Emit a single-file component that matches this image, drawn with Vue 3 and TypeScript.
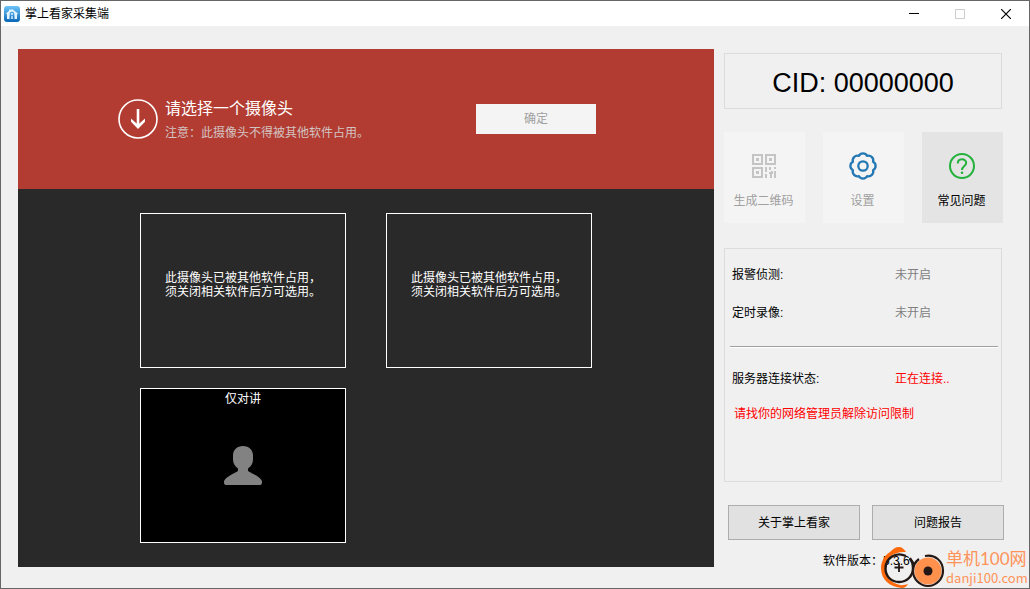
<script setup lang="ts">
interface Camera {
  id: number
  lines: string[]
}

interface StatusRow {
  label: string
  value: string
  alert?: boolean
}

const cameras: Camera[] = [
  { id: 1, lines: ['此摄像头已被其他软件占用，', '须关闭相关软件后方可选用。'] },
  { id: 2, lines: ['此摄像头已被其他软件占用，', '须关闭相关软件后方可选用。'] },
]

const features: StatusRow[] = [
  { label: '报警侦测:', value: '未开启' },
  { label: '定时录像:', value: '未开启' },
]

const connection: StatusRow = { label: '服务器连接状态:', value: '正在连接..', alert: true }
</script>

<template>
  <div class="window">
    <header class="titlebar">
      <svg class="app-icon" viewBox="0 0 16 16" aria-hidden="true">
        <defs>
          <linearGradient id="appBlue" x1="0" y1="0" x2="0" y2="1">
            <stop offset="0" stop-color="#6cc4f8" />
            <stop offset="1" stop-color="#0a67b8" />
          </linearGradient>
        </defs>
        <rect width="16" height="16" rx="3" fill="url(#appBlue)" />
        <path d="M2 7.500 5 5V3.500h1.500v.7L8 3l6 4.500-1 1V13h-2.500V9.500L8 7 5.500 9.500V13H3V8.500z" fill="#e4f4fd" />
        <circle cx="8" cy="8" r="2" fill="#5fb4ec" stroke="#2f8fd8" stroke-width=".8" />
        <circle cx="8" cy="8" r=".9" fill="#e4f4fd" />
        <path d="M6.800 13l.4-3h1.600l.4 3z" fill="#a9d6f4" />
      </svg>
      <h1 class="app-name">掌上看家采集端</h1>
      <div class="controls">
        <button type="button" class="control" aria-label="最小化">
          <svg viewBox="0 0 10 10"><path d="M0 4.500h10" stroke="#000" /></svg>
        </button>
        <button type="button" class="control" aria-label="最大化" disabled>
          <svg viewBox="0 0 10 10"><path d="M.5.5h9v9h-9z" fill="none" stroke="#ccc" /></svg>
        </button>
        <button type="button" class="control" aria-label="关闭">
          <svg viewBox="0 0 10 10"><path d="M0 0l10 10M10 0 0 10" stroke="#000" stroke-width="1.200" /></svg>
        </button>
      </div>
    </header>

    <div class="body">
      <main class="main">
        <section class="banner">
          <svg class="arrow" viewBox="0 0 40 40" aria-hidden="true">
            <circle cx="20" cy="20" r="19" fill="none" stroke="#fff" stroke-width="1.600" />
            <path d="M20 10v18" fill="none" stroke="#fff" stroke-width="2.600" />
            <path d="M13 19.500v3.200L20 30l7-7.300v-3.200l-7 6.200z" fill="#fff" />
          </svg>
          <div class="prompt">
            <h2>请选择一个摄像头</h2>
            <p>注意：此摄像头不得被其他软件占用。</p>
          </div>
          <button type="button" class="confirm" disabled>确定</button>
        </section>
        <section class="cameras">
          <button v-for="camera in cameras" :key="camera.id" type="button" class="camera">
            <span v-for="line in camera.lines" :key="line">{{ line }}</span>
          </button>
          <button type="button" class="camera talk">
            <span>仅对讲</span>
            <svg class="person" viewBox="0 0 40 40" aria-hidden="true">
              <path d="M20 0c6 0 10 4 10 9.500v4c0 4-2 7-5 9v2.500c3 2 8 4 11 6.500 2.500 2 3.300 3.500 3 5.500-.3 1.500-1.200 2-2.500 2h-33C2.200 39 1.300 38.500 1 37c-.3-2 .5-3.500 3-5.500 3-2.500 8-4.500 11-6.500v-2.500c-3-2-5-5-5-9v-4C10 4 14 0 20 0z" fill="#828282" />
            </svg>
          </button>
        </section>
      </main>

      <aside class="side">
        <div class="cid">CID: 00000000</div>

        <nav class="tiles">
          <button type="button" class="tile" disabled>
            <svg viewBox="0 0 28 28" aria-hidden="true">
              <g fill="none" stroke="#c4c4c4" stroke-width="2">
                <path d="M3 3h9v9H3zM16 3h9v9h-9zM3 16h9v9H3z" />
                <path d="M16 15v5M16 22v4M20 15v3M25 15v2M19 21h3v-2M21 21v5M25 19v7" />
              </g>
              <path d="M6 6h3v3H6zM19 6h3v3h-3zM6 19h3v3H6z" fill="#c4c4c4" />
            </svg>
            <span>生成二维码</span>
          </button>
          <button type="button" class="tile" disabled>
            <svg viewBox="-14 -14 28 28" aria-hidden="true">
              <g fill="none" stroke="#2478b4" stroke-width="2.300" stroke-linejoin="round">
                <path d="M10.070 4.170A4.700 4.700 0 0 1 4.170 10.070A4.700 4.700 0 0 1-4.170 10.070A4.700 4.700 0 0 1-10.070 4.170A4.700 4.700 0 0 1-10.070-4.170A4.700 4.700 0 0 1-4.170-10.070A4.700 4.700 0 0 1 4.170-10.070A4.700 4.700 0 0 1 10.070-4.170A4.700 4.700 0 0 1 10.070 4.170z" />
                <circle r="4.700" />
              </g>
            </svg>
            <span>设置</span>
          </button>
          <button type="button" class="tile active">
            <svg viewBox="-14 -14 28 28" aria-hidden="true">
              <g fill="none" stroke="#22b13a" stroke-width="2">
                <circle r="12" />
                <path d="M-4.200-2.500C-4.200-8 4.200-8 4.200-3 4.200 0 0 0 0 4" />
              </g>
              <circle cy="6.800" r="1.300" fill="#22b13a" />
            </svg>
            <span>常见问题</span>
          </button>
        </nav>

        <section class="status">
          <dl>
            <div v-for="row in features" :key="row.label" class="row">
              <dt>{{ row.label }}</dt>
              <dd>{{ row.value }}</dd>
            </div>
          </dl>
          <hr />
          <dl>
            <div class="row">
              <dt>{{ connection.label }}</dt>
              <dd :class="{ alert: connection.alert }">{{ connection.value }}</dd>
            </div>
          </dl>
          <p class="alert message">请找你的网络管理员解除访问限制</p>
        </section>

        <div class="actions">
          <button type="button">关于掌上看家</button>
          <button type="button">问题报告</button>
        </div>
        <p class="version">软件版本：5.3.6</p>
      </aside>
    </div>

    <div class="brand">
      <svg class="brand-logo" viewBox="0 0 66 42" aria-hidden="true">
        <path d="M10 6C13 3 15 1 19 1c3 0 5 2 7 5C14 5 5 12 5 22c0 9 6 15 15 17 3 .5 5 0 8-1-1 2-3 4-6 4C9 41 1 33 1 22 1 15 5 9 10 6z" fill="#ff6a0d" />
        <path d="M26 10C15 5 5.500 13 5.500 22.500c0 8 6 13.500 13.500 13.500 8 0 14-6 14-14 0-4-1-7-3.500-9.500" fill="none" stroke="#231815" stroke-width="2.400" />
        <path d="M19 17v9M14.500 21.500h9" stroke="#231815" stroke-width="1.800" />
        <circle cx="48" cy="25" r="13.500" fill="#ff914d" />
        <path d="M30 12l4 6M45 10c10-2 18 5 18 15 0 8-7 15-15 15s-15-7-15-15c0-5 2-9 6-12" fill="none" stroke="#231815" stroke-width="2.200" />
        <circle cx="48" cy="25" r="4.500" fill="#231815" />
      </svg>
      <div class="brand-text">
        <span class="brand-name">单机100网</span>
        <span class="brand-site">danji100.com</span>
      </div>
    </div>
  </div>
</template>

<style>
body {
  margin: 0;
}
</style>

<style scoped>
.window {
  position: relative;
  box-sizing: border-box;
  min-height: 100vh;
  border: 1px solid #666;
  background: #f0f0f0;
  color: #000;
  font: 12px/14px "Liberation Sans", "Noto Sans CJK SC", sans-serif;
}

h1,
h2,
p,
dl,
dd {
  margin: 0;
  font-weight: normal;
}

button {
  padding: 0;
  border: 0;
  font: inherit;
  color: inherit;
}

.titlebar {
  display: flex;
  align-items: center;
  height: 25px;
  padding-left: 3px;
  background: #fff;
}

.app-icon {
  width: 16px;
  height: 16px;
}

.app-name {
  margin-left: 5px;
  font-size: 12px;
}

.controls {
  display: flex;
  height: 100%;
  margin-left: auto;
}

.control {
  display: grid;
  place-items: center;
  width: 46px;
  background: transparent;
}

.control svg {
  width: 10px;
  height: 10px;
}

.body {
  display: flex;
  gap: 10px;
  padding: 23px 25px 18px 17px;
}

.main {
  flex: 1;
  align-self: flex-start;
  background: #292929;
  color: #fff;
}

.banner {
  display: flex;
  align-items: center;
  box-sizing: border-box;
  height: 140px;
  padding: 0 118px 0 100px;
  background: #b23c32;
}

.arrow {
  width: 40px;
  height: 40px;
}

.prompt {
  padding-top: 4px;
  margin-left: 7px;
}

.prompt h2 {
  font-size: 16px;
  line-height: 24px;
}

.prompt p {
  line-height: 24px;
  color: #d3c4c2;
}

.confirm {
  width: 120px;
  height: 30px;
  margin-left: auto;
  background: #f4f4f4;
  color: #a0a0a0;
}

.cameras {
  display: grid;
  grid-template-columns: repeat(auto-fill, 206px);
  gap: 20px 40px;
  padding: 24px 118px 24px 122px;
}

.camera {
  display: flex;
  flex-direction: column;
  align-items: center;
  justify-content: center;
  height: 155px;
  padding-bottom: 12px;
  border: 1px solid #fff;
  background: transparent;
  white-space: nowrap;
}

.talk {
  justify-content: flex-start;
  padding: 3px 0 0;
  background: #000;
}

.person {
  width: 40px;
  height: 40px;
  margin-top: 40px;
}

.side {
  display: flex;
  flex-direction: column;
  width: 280px;
  padding-top: 4px;
}

.cid {
  margin-right: 2px;
  padding-top: 4px;
  border: 1px solid #dcdcdc;
  font-size: 27px;
  line-height: 50px;
  text-align: center;
}

.tiles {
  display: grid;
  grid-template-columns: repeat(3, 1fr);
  gap: 18px;
  margin: 23px 1px 25px 0;
}

.tile {
  display: flex;
  flex-direction: column;
  align-items: center;
  gap: 14px;
  height: 91px;
  padding: 20px 2px 0 0;
  background: #f4f4f4;
  color: #a0a0a0;
}

.tile svg {
  width: 28px;
  height: 28px;
}

.active {
  background: #e4e4e4;
  color: #000;
}

.status {
  box-sizing: border-box;
  height: 234px;
  margin-right: 2px;
  padding-top: 7px;
  border: 1px solid #dcdcdc;
}

.row {
  display: grid;
  grid-template-columns: 163px 1fr;
  align-items: center;
  height: 38px;
  padding-left: 7px;
}

.row dd {
  color: #808080;
}

.status hr {
  height: 1px;
  margin: 14px 3px 12px 5px;
  border: 0;
  border-top: 1px solid #a0a0a0;
  background: #fff;
}

.status .alert {
  color: #f00;
}

.message {
  padding: 9px 0 0 9px;
}

.actions {
  display: grid;
  grid-template-columns: 1fr 1fr;
  gap: 12px;
  margin: 23px 0 14px 4px;
}

.actions button {
  height: 35px;
  border: 1px solid #adadad;
  background: #e1e1e1;
}

.version {
  padding-left: 99px;
}

.brand {
  position: absolute;
  right: 0;
  bottom: 0;
  display: flex;
  width: 149px;
}

.brand-logo {
  width: 66px;
  height: 42px;
}

.brand-text {
  display: flex;
  flex-direction: column;
  justify-content: center;
  padding-top: 2px;
  font-family: Lato, "Noto Sans CJK SC", sans-serif;
  color: #ff935a;
  white-space: nowrap;
}

.brand-name {
  font-size: 17px;
  line-height: 20px;
}

.brand-site {
  font-family: "Noto Sans CJK SC", sans-serif;
  font-size: 13px;
  line-height: 18px;
}
</style>
